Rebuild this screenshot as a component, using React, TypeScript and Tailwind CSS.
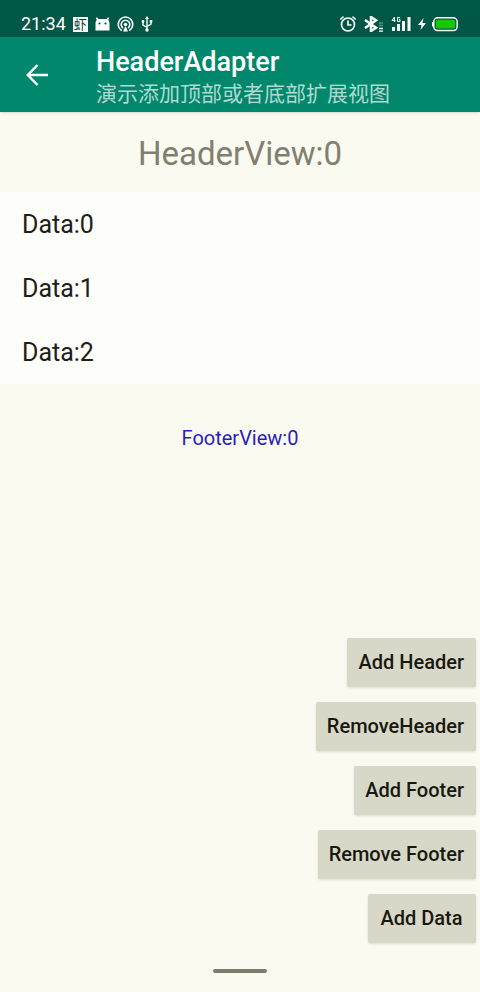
import type { ReactNode } from "react";

const rows = ["Data:0", "Data:1", "Data:2"];
const actions = ["Add Header", "RemoveHeader", "Add Footer", "Remove Footer", "Add Data"];

function Glyph({ w, h, children, label }: { w: number; h: number; children: ReactNode; label: string }) {
  return (
    <svg width={w} height={h} viewBox={`0 0 ${w} ${h}`} fill="none" role="img" aria-label={label} className="shrink-0">
      {children}
    </svg>
  );
}

function StatusBar() {
  return (
    <div className="flex h-[37px] items-end justify-between bg-[#005746] pr-[21px] pb-[5px] pl-[21px] text-white">
      <div className="flex h-4 items-center gap-[7px]">
        <span className="text-lg leading-4">21:34</span>
        <span className="flex size-[15px] items-center justify-center bg-white text-[13px] leading-[15px] text-[#003c32]">
          虾
        </span>
        <Glyph w={15} h={14} label="Android">
          <path d="M0.500 13.500V6.500C0.500 4.800 1 3.800 1.800 3L0.800 1L2 0.300L3.500 2H11.500L13 0.300L14.200 1L13.200 3C14 3.800 14.500 4.800 14.500 6.500V13.500Z" fill="#fff" />
          <circle cx="4.500" cy="6.500" r="1.100" fill="#005746" />
          <circle cx="10.500" cy="6.500" r="1.100" fill="#005746" />
        </Glyph>
        <Glyph w={17} h={16} label="Hotspot">
          <g stroke="#fff" strokeWidth="1.600" strokeLinecap="round">
            <path d="M4.200 14.200A7.300 7.300 0 1 1 12.800 14.200" />
            <path d="M5.500 11.600A4.300 4.300 0 1 1 11.500 11.600" />
          </g>
          <circle cx="8.500" cy="8.500" r="1.800" fill="#fff" />
          <path d="M8.500 10L6 15.500H11Z" fill="#fff" />
        </Glyph>
        <Glyph w={12} h={16} label="USB">
          <path d="M6 2V14M2 6V9L6 11.500M10 5V8L6 10.500" stroke="#fff" strokeWidth="1.400" />
          <path d="M6 0L8 3H4Z" fill="#fff" />
          <circle cx="2" cy="5.500" r="1.400" fill="#fff" />
          <path d="M8.700 4H11.300V6.500H8.700Z" fill="#fff" />
          <circle cx="6" cy="14" r="1.700" fill="#fff" />
        </Glyph>
      </div>
      <div className="flex h-4 items-center gap-[7px]">
        <Glyph w={17} h={16} label="Alarm">
          <g stroke="#fff" strokeWidth="1.600" strokeLinecap="round">
            <circle cx="8" cy="8.500" r="6.500" />
            <path d="M8 5V9H11M0.800 3L3 1M15.200 3L13 1" />
          </g>
        </Glyph>
        <Glyph w={20} h={16} label="Bluetooth">
          <path d="M1 4L12 11.800L7 15V1L12 4.200L1 12" stroke="#fff" strokeWidth="2.500" />
          <path d="M15 15.200H19M15 12.500H19" stroke="#fff" strokeWidth="1.300" />
          <path d="M15 9.500H19M15 7H19" stroke="#5c918a" strokeWidth="1.300" />
        </Glyph>
        <Glyph w={20} h={16} label="4G signal">
          <path d="M2.500 11V15M7.500 8V15M12.500 5V15M18 1V15" stroke="#fff" strokeWidth="3" />
          <path d="M3.500 6V1L1 4.500H4.500M9 1.500H6.500V5.500H9V3.500H7.800" stroke="#fff" strokeWidth="1" />
        </Glyph>
        <div className="flex items-center gap-[5px]">
          <Glyph w={8} h={12} label="Charging">
            <path d="M5.500 0L0 7H3.500L2.500 12L8 5H4.500Z" fill="#fff" />
          </Glyph>
          <Glyph w={28} h={16} label="Battery">
            <rect x="2.800" y="1.800" width="23.400" height="12.800" rx="4" stroke="#fff" strokeWidth="1.500" />
            <path d="M1.800 6V10.500" stroke="#fff" strokeWidth="1.500" />
            <rect x="4.800" y="3.800" width="19.400" height="8.800" rx="2" fill="#15c800" />
          </Glyph>
        </div>
      </div>
    </div>
  );
}

export default function App() {
  return (
    <div className="flex min-h-screen flex-col bg-[#fafaf0] font-[Roboto,'Noto_Sans_CJK_SC',sans-serif] text-[#202018]">
      <StatusBar />
      <header className="flex h-[75px] items-center bg-[#00876c] pl-[26px] text-white shadow-sm">
        <button type="button" aria-label="Back" className="w-[70px]">
          <svg width="22" height="22" viewBox="0 0 22 22" fill="none" stroke="currentColor" strokeWidth="2.500" aria-hidden="true">
            <path d="M22 11H2M11.500 1L1.800 11L11.500 21" />
          </svg>
        </button>
        <div className="pt-[7px]">
          <h1 className="text-[27px] leading-8 font-medium">HeaderAdapter</h1>
          <p className="text-[21px] leading-8 text-white/70">演示添加顶部或者底部扩展视图</p>
        </div>
      </header>
      <main className="flex flex-1 flex-col">
        <h2 className="h-20 text-center text-[33px] leading-[83px] text-[#808070]">HeaderView:0</h2>
        <ul className="bg-[#fdfdfa]">
          {rows.map((row) => (
            <li key={row} className="h-16 px-[22px] text-[25px] leading-[66px]">
              {row}
            </li>
          ))}
        </ul>
        <p className="pt-[42px] text-center text-xl leading-6 text-[#2a1eb8]">FooterView:0</p>
        <div className="mt-auto flex flex-col items-end gap-[15px] pr-1 pb-[25px]">
          {actions.map((action) => (
            <button
              key={action}
              type="button"
              className="h-[49px] min-w-[108px] rounded-xs bg-[#d8d8c8] pr-3 pb-0.5 pl-[11px] text-xl font-medium text-[#181810] shadow-sm"
            >
              {action}
            </button>
          ))}
        </div>
      </main>
      <footer className="flex h-6 justify-center">
        <div className="mt-px h-1 w-[54px] rounded-full bg-[#7d7d6c]" />
      </footer>
    </div>
  );
}
